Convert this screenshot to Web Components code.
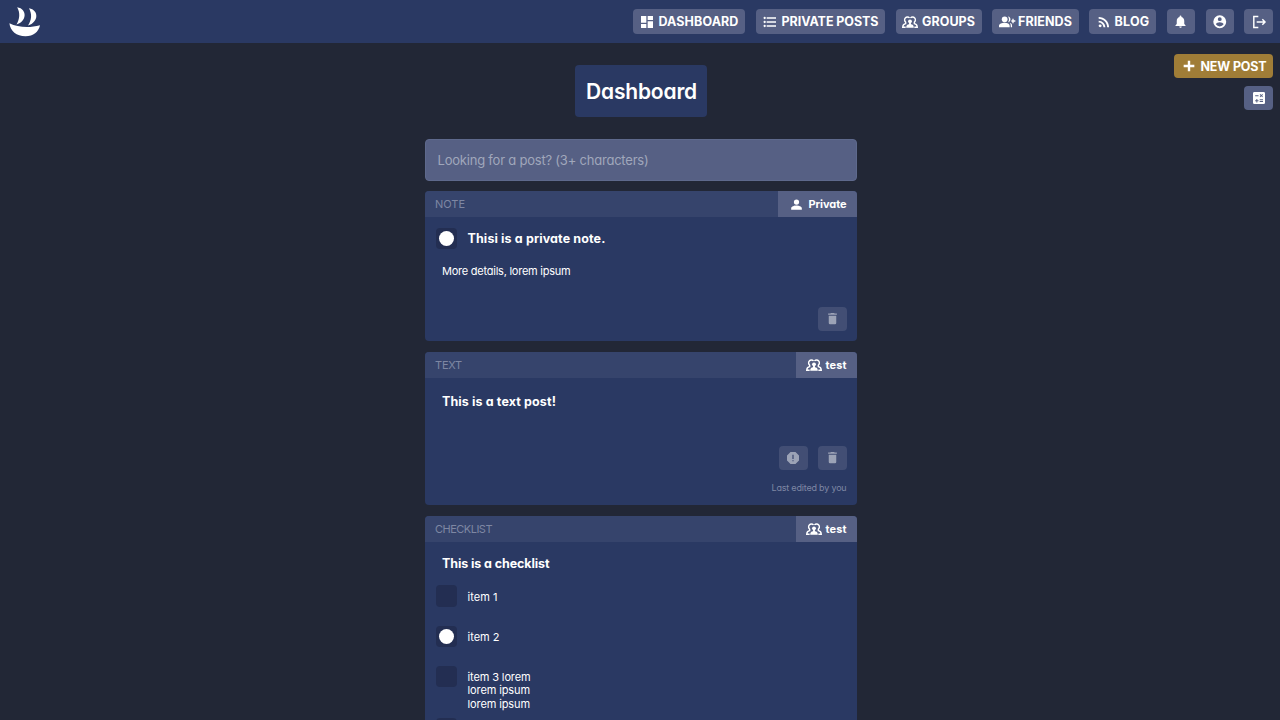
<!DOCTYPE html>
<html lang="en">
<head>
<meta charset="utf-8">
<title>Dashboard</title>
<style>
html, body { margin: 0; height: 100%; overflow: hidden; background: #222736; }
body { font-family: Inter, "Noto Sans", sans-serif; font-feature-settings: "cv11"; color: #fff; }
</style>
</head>
<body>
<app-shell></app-shell>
<script>
const ICONS = {
  dashboard: '<path d="M3 3h8v10H3zM13 3h8v6h-8zM3 15h8v6H3zM13 11h8v10h-8z"/>',
  list: '<path d="M7 5h14v2.2H7zM7 11h14v2.2H7zM7 17h14v2.2H7z"/><circle cx="4" cy="6" r="1.7"/><circle cx="4" cy="12" r="1.7"/><circle cx="4" cy="18" r="1.7"/>',
  groups: '<g fill="none" stroke="#fff" stroke-width="2.1"><path d="M5.600 12.200A4.300 4.300 0 1 1 11.300 5.800M18.400 12.200A4.300 4.300 0 1 0 12.700 5.800"/><path d="M5.500 11.500v3C2.500 15 1.200 16.500 1.100 19.800H5.500M18.500 11.500v3c3 .5 4.300 2 4.400 5.300H18.500"/></g><circle cx="12" cy="11" r="2.900"/><path d="M10.600 12.500h2.800v3c3 .4 4.300 2 4.300 5.300H6.300c0-3.300 1.300-4.900 4.300-5.300z"/>',
  friends: '<circle cx="8.500" cy="8" r="4.300"/><path d="M0 20v-2.500c0-3 4.500-4.500 8.500-4.500s7.500 1.500 7.500 4.500V20zM13.500 3.700c5 .3 5 8.300 0 8.600 2-2.500 2-6 0-8.600zM16 13.300c2.500.7 3.600 2.200 3.600 4.200V20h-2v-2.500c0-1.700-.5-3-1.600-4.200zM20 7h2v2.500h2.500v2H22V14h-2v-2.500h-1.500v-2H20z"/>',
  blog: '<circle cx="6.200" cy="17.800" r="2.200"/><path d="M4 4.400v2.900c7 0 12.700 5.700 12.700 12.700h2.900C19.600 11.400 12.600 4.400 4 4.400zM4 10v2.900c3.900 0 7.100 3.200 7.100 7.100H14c0-5.500-4.500-10-10-10z"/>',
  bell: '<path d="M12 22c1.100 0 2-.9 2-2h-4a2 2 0 0 0 2 2zm6-6v-5c0-3.100-1.600-5.600-4.500-6.300V4a1.500 1.500 0 0 0-3 0v.7C7.600 5.400 6 7.900 6 11v5l-2 2v1h16v-1z"/>',
  user: '<path d="M12 2a10 10 0 1 0 0 20 10 10 0 0 0 0-20zm0 3a3 3 0 1 1 0 6 3 3 0 0 1 0-6zm0 14.200a7.200 7.200 0 0 1-6-3.200c0-2 4-3.100 6-3.100s6 1.100 6 3.100a7.200 7.200 0 0 1-6 3.200z"/>',
  logout: '<path d="M11 3.900H4.200v16.200H11M8.500 12h12M17 8l4 4-4 4" fill="none" stroke="#fff" stroke-width="2.200"/>',
  plus: '<path d="M10.200 4h3.600v6.200H20v3.600h-6.200V20h-3.600v-6.200H4v-3.600h6.200z"/>',
  calc: '<path fill-rule="evenodd" d="M5 3h14a2 2 0 0 1 2 2v14a2 2 0 0 1-2 2H5a2 2 0 0 1-2-2V5c0-1.100.9-2 2-2zm1.300 4.700v1.500h5V7.700zM14 6l-1 1 1.500 1.500L13 10l1 1 1.500-1.500L17 11l1-1-1.500-1.500L18 7l-1-1-1.500 1.500zM8 13.500v1.800H6.200v1.500H8v1.800h1.500v-1.800h1.800v-1.500H9.500v-1.800zm5 .5v1.500h5V14zm0 2.600v1.500h5v-1.500z"/>',
  person: '<circle cx="12" cy="8" r="4.200"/><path d="M12 13.400c-2.800 0-8.500 1.400-8.500 4.200V20.500h17v-2.900c0-2.800-5.700-4.200-8.500-4.200z"/>',
  trash: '<path d="M6 7.500h12V19a2 2 0 0 1-2 2H8a2 2 0 0 1-2-2zM19 4h-3.500l-1-1h-5l-1 1H5v2h14z"/>',
  alert: '<path fill-rule="evenodd" d="M8.300 3h7.400L21 8.300v7.400L15.700 21H8.300L3 15.700V8.300zM11 7v6.500h2V7zm0 8.200V17h2v-1.800z"/>'
};

class UiIcon extends HTMLElement {
  constructor() {
    super();
    const s = this.getAttribute('size') || 16;
    this.attachShadow({ mode: 'open' }).innerHTML = `
      <style>:host{display:block;flex:none;width:${s}px;height:${s}px}svg{display:block;overflow:visible}</style>
      <svg width="${s}" height="${s}" viewBox="0 0 24 24" fill="#fff">${ICONS[this.getAttribute('name')]}</svg>`;
  }
}
customElements.define('ui-icon', UiIcon);

/* A line of text tracked to a given width. */
class UiText extends HTMLElement {
  constructor() {
    super();
    this.attachShadow({ mode: 'open' }).innerHTML = `
      <style>:host{display:block;flex:none;white-space:nowrap}span{display:inline-block}</style><span><slot></slot></span>`;
  }
  connectedCallback() {
    const span = this.shadowRoot.querySelector('span');
    const w = parseFloat(this.getAttribute('w'));
    const track = (w - span.getBoundingClientRect().width) / this.textContent.length;
    span.style.letterSpacing = track.toFixed(3) + 'px';
    this.style.width = w + 'px';
  }
}

class UiButton extends HTMLElement {
  constructor() {
    super();
    const w = this.getAttribute('w'), h = this.getAttribute('h') || 24.5;
    this.attachShadow({ mode: 'open' }).innerHTML = `
      <style>
        :host{display:flex;flex:none;box-sizing:border-box;align-items:center;justify-content:space-between;
          width:${w}px;height:${h}px;padding:0 6.5px 0 6.5px;border-radius:4px;background:#566084;
          font-size:12.5px;font-weight:700;line-height:23px}
        :host([icon]){justify-content:center;padding:0}
        :host([gold]){background:#a07d37}
        :host([faded]){background:#424e74}
        :host([faded]) ::slotted(ui-icon){opacity:.48}
      </style><slot></slot>`;
  }
}
customElements.define('ui-button', UiButton);

class AppHeader extends HTMLElement {
  constructor() {
    super();
    this.attachShadow({ mode: 'open' }).innerHTML = `
      <style>
        :host{display:flex;box-sizing:border-box;height:43px;padding:0 7px 0 9px;align-items:center;
          justify-content:space-between;background:#2a3963}
        nav{display:flex;gap:10.5px}
        .logo{display:block}
      </style>
      <svg class="logo" width="32" height="32" viewBox="0 0 32 32" fill="#fff">
        <path d="M8.200 1.300C18.500 3 18 15.500 7.500 18.600 10.800 13 11.300 7 8.200 1.300zM20 2.200C30 4 30 16 19 19.500 22.700 14 23.200 8 20 2.200z"/>
        <path d="M.4 17.300C9 21.600 20.500 22.200 31 19.300 29.500 26 24.500 30.200 16.500 30.200 7.500 30.200 1.200 25.200.4 17.300z"/>
      </svg>
      <nav>
        <ui-button w="112.5"><ui-icon name="dashboard"></ui-icon><ui-text w="80">DASHBOARD</ui-text></ui-button>
        <ui-button w="129.5"><ui-icon name="list"></ui-icon><ui-text w="97">PRIVATE POSTS</ui-text></ui-button>
        <ui-button w="86"><ui-icon name="groups"></ui-icon><ui-text w="53">GROUPS</ui-text></ui-button>
        <ui-button w="86.500"><ui-icon name="friends"></ui-icon><ui-text w="54">FRIENDS</ui-text></ui-button>
        <ui-button w="67"><ui-icon name="blog"></ui-icon><ui-text w="35">BLOG</ui-text></ui-button>
        <ui-button icon w="28.500"><ui-icon name="bell" size="15"></ui-icon></ui-button>
        <ui-button icon w="28"><ui-icon name="user" size="15.500"></ui-icon></ui-button>
        <ui-button icon w="29"><ui-icon name="logout"></ui-icon></ui-button>
      </nav>`;
  }
}

class UiCheck extends HTMLElement {
  constructor() {
    super();
    this.attachShadow({ mode: 'open' }).innerHTML = `
      <style>
        :host{display:grid;flex:none;place-items:center;width:21.5px;height:21.5px;border-radius:4px;background:#232e52}
        i{display:none;width:15px;height:15px;border-radius:50%;background:#fff}
        :host([on]) i{display:block}
      </style><i></i>`;
  }
}
customElements.define('ui-check', UiCheck);

class PostCard extends HTMLElement {
  constructor() {
    super();
    this.attachShadow({ mode: 'open' }).innerHTML = `
      <style>
        :host{display:flex;flex-direction:column;flex:none;box-sizing:border-box;border-radius:4px;
          background:#2a3963;overflow:hidden}
        header{display:flex;flex:none;height:26px;justify-content:space-between;background:#36446c;line-height:25px}
        .kind{padding-left:10px;font-size:11px;line-height:26.5px;color:#7e87a3}
        .tag{display:flex;align-items:center;box-sizing:border-box;background:#566084;
          font-size:11px;font-weight:700;padding-right:10.5px;justify-content:flex-end}
        .body{display:flex;flex-direction:column;flex:1}
      </style>
      <header><div class="kind"><slot name="kind"></slot></div>
      <div class="tag" style="width:${this.getAttribute('tagw')}px;gap:${this.getAttribute('taggap')}px"><slot name="tag"></slot></div></header>
      <div class="body"><slot></slot></div>`;
  }
}
customElements.define('post-card', PostCard);

class AppShell extends HTMLElement {
  constructor() {
    super();
    this.attachShadow({ mode: 'open' }).innerHTML = `
      <style>
        :host{display:block;height:720px;overflow:hidden}
        .page{display:grid;grid-template-columns:425px 432px 1fr}
        main{grid-column:2;display:flex;flex-direction:column;padding-top:22px}
        aside{display:flex;flex-direction:column;align-items:flex-end;gap:7.5px;padding:11px 7px 0 0}
        h1{align-self:center;box-sizing:border-box;width:132px;height:52px;margin:0 0 21.5px;padding-left:11px;
          border-radius:4px;background:#2a3963;font-size:21px;font-weight:600;line-height:53px}
        .search{box-sizing:border-box;height:42px;padding-left:11.5px;border-radius:4px;border:1px solid #5e698c;
          background:#566084;color:#a0a7bb;font-size:13px;line-height:40px;margin-bottom:10.5px}
        post-card{margin-bottom:11px}
        .row{display:flex;padding-left:10.5px;gap:10.5px}
        .title{font-size:12.5px;font-weight:700;line-height:20px}
        .small{font-size:11px;line-height:13.500px}
        .indent{margin-left:17px}
        .actions{display:flex;justify-content:flex-end;gap:10.5px;padding-right:10px;margin-top:auto}
        .edited{align-self:flex-end;margin:11.5px 10.5px 11.5px 0;font-size:9px;line-height:12px;color:#7e87a3}
      </style>
      <app-header></app-header>
      <div class="page">
        <main>
          <h1><ui-text w="111">Dashboard</ui-text></h1>
          <div class="search"><ui-text w="211">Looking for a post? (3+ characters)</ui-text></div>
          <post-card tagw="79" taggap="5" style="height:150px">
            <ui-text slot="kind" w="30">NOTE</ui-text>
            <ui-icon slot="tag" name="person" size="15"></ui-icon><ui-text slot="tag" w="38">Private</ui-text>
            <div class="row" style="margin-top:10.5px"><ui-check on></ui-check><ui-text class="title" style="margin-top:1px" w="138">Thisi is a private note.</ui-text></div>
            <ui-text class="small indent" style="margin-top:15.5px" w="128.5">More details, lorem ipsum</ui-text>
            <div class="actions" style="margin-bottom:10.5px"><ui-button icon faded w="29" h="24"><ui-icon name="trash" size="15"></ui-icon></ui-button></div>
          </post-card>
          <post-card tagw="61.5" taggap="4" style="height:153px">
            <ui-text slot="kind" w="27">TEXT</ui-text>
            <ui-icon slot="tag" name="groups"></ui-icon><ui-text slot="tag" w="21">test</ui-text>
            <ui-text class="title indent" style="margin-top:14px" w="114">This is a text post!</ui-text>
            <div class="actions"><ui-button icon faded w="29"><ui-icon name="alert"></ui-icon></ui-button><ui-button icon faded w="29"><ui-icon name="trash" size="15"></ui-icon></ui-button></div>
            <ui-text class="edited" w="75">Last edited by you</ui-text>
          </post-card>
          <post-card tagw="61.5" taggap="4" style="height:260px">
            <ui-text slot="kind" w="57">CHECKLIST</ui-text>
            <ui-icon slot="tag" name="groups"></ui-icon><ui-text slot="tag" w="21">test</ui-text>
            <ui-text class="title indent" style="margin-top:11.5px" w="107.5">This is a checklist</ui-text>
            <div class="row small" style="margin-top:11.5px"><ui-check></ui-check><ui-text style="margin-top:6px" w="30">item 1</ui-text></div>
            <div class="row small" style="margin-top:19px"><ui-check on></ui-check><ui-text style="margin-top:5.500px" w="32">item 2</ui-text></div>
            <div class="row small" style="margin-top:18.5px"><ui-check></ui-check>
              <div style="margin-top:5.300px"><ui-text w="63">item 3 lorem</ui-text><ui-text w="62.500">lorem ipsum</ui-text><ui-text w="62.500">lorem ipsum</ui-text></div></div>
            <div class="row" style="margin-top:7px"><ui-check></ui-check></div>
          </post-card>
        </main>
        <aside>
          <ui-button gold w="99" h="24"><ui-icon name="plus"></ui-icon><ui-text w="66">NEW POST</ui-text></ui-button>
          <ui-button icon w="29" h="24"><ui-icon name="calc"></ui-icon></ui-button>
        </aside>
      </div>`;
  }
}
customElements.define('app-header', AppHeader);
customElements.define('app-shell', AppShell);
customElements.define('ui-text', UiText);
</script>
</body>
</html>
